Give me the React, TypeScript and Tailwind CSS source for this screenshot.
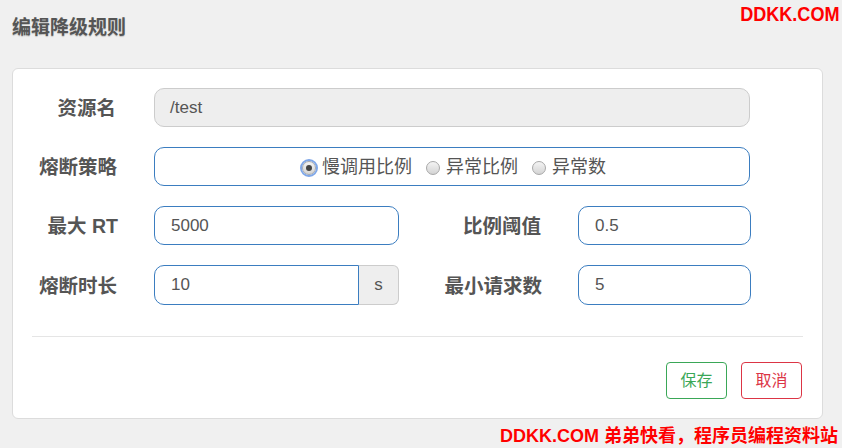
import React from "react";

const cjk = { fontFamily: '"Liberation Sans", "Noto Sans CJK SC", sans-serif' };

function Radio({ checked, label }: { checked?: boolean; label: string }) {
  return (
    <label className="flex items-center gap-[6px] text-[18px] text-[#555]">
      <span
        className={
          "relative flex h-[14px] w-[14px] items-center justify-center rounded-full border border-[#a8a8a8] bg-gradient-to-b from-[#f4f4f4] to-[#d4d4d4] " +
          (checked ? "outline outline-2 outline-offset-0 outline-[#7fa7e8]" : "")
        }
      >
        {checked && <span className="h-[6px] w-[6px] rounded-full bg-[#444]" />}
      </span>
      <span>{label}</span>
    </label>
  );
}

export default function App() {
  return (
    <div className="relative h-[448px] w-[842px] overflow-hidden bg-[#f0f0f0]" style={cjk}>
      <div className="absolute right-[3px] top-[1px] origin-right scale-x-[0.86] text-[21px] font-bold leading-[26px] text-[#ff0000]">DDKK.COM</div>
      <div className="absolute bottom-[1px] right-[4px] text-[18px] font-bold leading-[22px] text-[#ff0000]">
        DDKK.COM 弟弟快看，程序员编程资料站
      </div>

      <div className="px-[12px] pt-[15px]">
        <h1 className="text-[19px] font-bold leading-[26px] text-[#555] [text-shadow:0_1px_1px_rgba(0,0,0,0.2)]">编辑降级规则</h1>
      </div>

      <div className="mx-[12px] mt-[27px] w-[811px] rounded-[6px] border border-[#dcdcdc] bg-white pt-[19px] pb-[19px]">
        <div className="flex flex-col gap-[20px]">
          <div className="flex items-center">
            <div className="w-[103px] pt-[3px] text-right text-[19.5px] font-bold text-[#555]">资源名</div>
            <div className="ml-[38px] flex h-[39px] w-[596px] items-center rounded-[10px] border border-[#cccccc] bg-[#eeeeee] px-[15px] text-[17px] text-[#555]">
              /test
            </div>
          </div>

          <div className="flex items-center">
            <div className="w-[104px] pt-[3px] text-right text-[19.5px] font-bold text-[#555]">熔断策略</div>
            <div className="ml-[37px] flex h-[39px] w-[596px] items-center justify-center gap-[14px] rounded-[10px] border border-[#3b7dc0] pl-[4px] pt-[2px]">
              <Radio checked label="慢调用比例" />
              <Radio label="异常比例" />
              <Radio label="异常数" />
            </div>
          </div>

          <div className="flex items-center">
            <div className="w-[105px] pt-[3px] text-right text-[19.5px] font-bold text-[#555]">最大 RT</div>
            <div className="ml-[36px] flex h-[39px] w-[245px] items-center rounded-[10px] border border-[#3b7dc0] px-[16px] text-[17px] text-[#555]">
              5000
            </div>
            <div className="w-[142px] pt-[3px] text-right text-[19.5px] font-bold text-[#555]">比例阈值</div>
            <div className="ml-[37px] flex h-[39px] w-[173px] items-center rounded-[10px] border border-[#3b7dc0] px-[16px] text-[17px] text-[#555]">
              0.5
            </div>
          </div>

          <div className="flex items-center">
            <div className="w-[104px] pt-[3px] text-right text-[19.5px] font-bold text-[#555]">熔断时长</div>
            <div className="ml-[37px] flex h-[40px] w-[245px]">
              <div className="flex flex-1 items-center rounded-l-[10px] border border-[#3b7dc0] px-[16px] text-[17px] text-[#555]">
                10
              </div>
              <div className="flex w-[40px] items-center justify-center rounded-r-[6px] border border-l-0 border-[#cccccc] bg-[#eeeeee] text-[17px] text-[#555]">
                s
              </div>
            </div>
            <div className="w-[143px] pt-[3px] text-right text-[19.5px] font-bold text-[#555]">最小请求数</div>
            <div className="ml-[36px] flex h-[40px] w-[173px] items-center rounded-[10px] border border-[#3b7dc0] px-[16px] text-[17px] text-[#555]">
              5
            </div>
          </div>
        </div>

        <div className="mx-[19px] mt-[31px] h-px bg-[#e5e5e5]" />

        <div className="mr-[20px] mt-[25px] flex justify-end gap-[14px]">
          <button className="h-[37px] w-[61px] rounded-[4px] border border-[#3aa757] text-[16px] text-[#3aa757]">保存</button>
          <button className="h-[37px] w-[61px] rounded-[4px] border border-[#dc3545] text-[16px] text-[#dc3545]">取消</button>
        </div>
      </div>
    </div>
  );
}
